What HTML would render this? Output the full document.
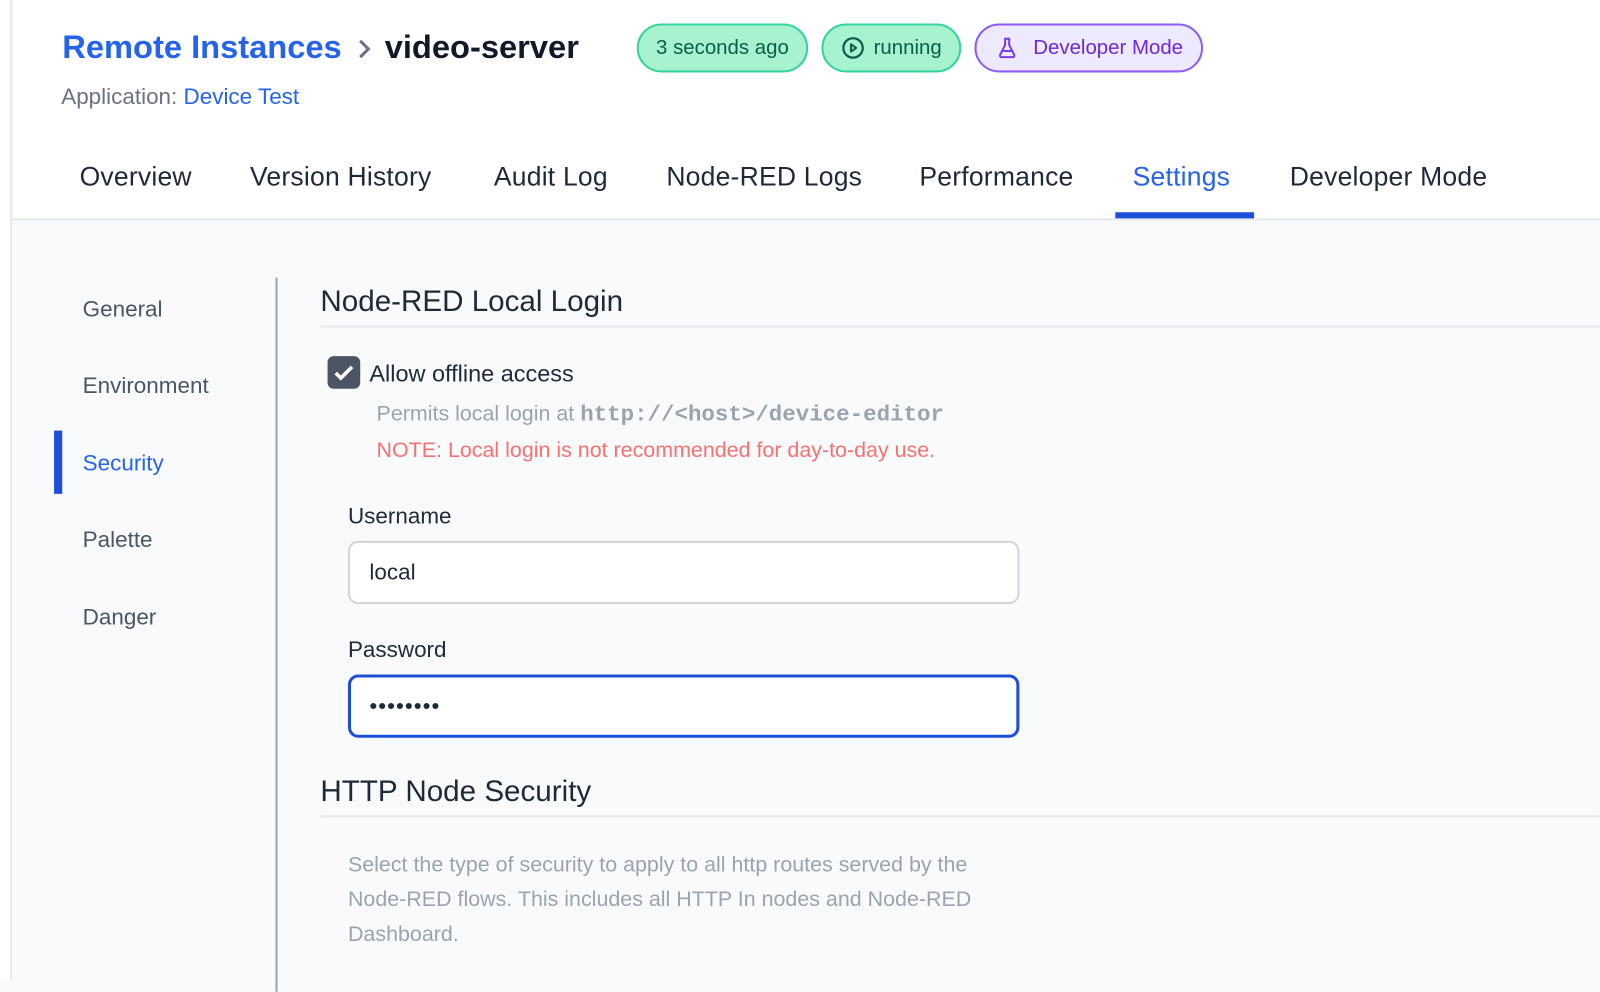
<!DOCTYPE html>
<html><head><meta charset="utf-8"><style>
*{box-sizing:border-box;margin:0;padding:0}
html,body{width:1600px;height:956px;overflow:hidden}
body{font-family:"Liberation Sans",sans-serif;background:#f9fafb;color:#1f2937}
#w{position:absolute;left:0;top:0;width:1568px;height:960px;transform:scale(1.0204);transform-origin:0 0;background:#fff}
.abs{position:absolute;white-space:nowrap}
.left{position:absolute;left:10px;top:0;width:2px;height:960px;background:#e5e7eb}
.main{position:absolute;left:12px;top:214px;right:0;bottom:0;background:#f9fafb;border-top:2px solid #e5e7eb}
.pill{position:absolute;top:23px;height:48px;border-radius:24px;font-size:20px;display:flex;align-items:center;justify-content:center;gap:8px}
.tab{position:absolute;top:158px;font-size:26px;color:#1f2937;letter-spacing:0.2px}
.side{position:absolute;left:81px;font-size:22px;color:#4b5563}
.h{position:absolute;left:314px;font-size:29px;color:#1f2937}
.rule{position:absolute;left:314px;right:0;height:2px;background:#e5e7eb}
.input{position:absolute;left:341px;width:658px;height:62px;border-radius:10px;background:#fff;font-size:22px;padding-left:19px;display:flex;align-items:center}
</style></head><body><div id="w">
<div class="left"></div>
<div class="abs" style="left:61px;top:28px;font-size:32px;font-weight:bold;color:#2563eb">Remote Instances</div>
<svg class="abs" style="left:348px;top:36px" width="18" height="24" viewBox="0 0 18 24"><path d="M5 4l8 8-8 8" stroke="#6b7280" stroke-width="3" fill="none"/></svg>
<div class="abs" style="left:377px;top:28px;font-size:32px;font-weight:bold;color:#111827">video-server</div>
<div class="abs" style="left:60px;top:82px;font-size:22px;color:#6b7280">Application: <span style="color:#2563eb">Device Test</span></div>
<div class="pill" style="left:624px;width:168px;background:#a7f3d0;border:2px solid #34d399;color:#065f46">3 seconds ago</div>
<div class="pill" style="left:805px;width:137px;background:#a7f3d0;border:2px solid #34d399;color:#065f46"><svg width="24" height="24" viewBox="0 0 24 24"><circle cx="12" cy="12" r="9.5" stroke="#065f46" stroke-width="2.2" fill="none"/><path d="M10 8.5v7l5-3.5z" stroke="#065f46" stroke-width="2" fill="none" stroke-linejoin="round"/></svg>running</div>
<div class="pill" style="left:955px;width:224px;background:#ede9fe;border:2px solid #8b5cf6;color:#6d28d9;gap:14px"><svg width="24" height="24" viewBox="0 0 24 24"><path d="M9 3h6M10 3v6l-5 10a1.5 1.5 0 0 0 1.3 2h11.4a1.5 1.5 0 0 0 1.3-2L14 9V3M7 15h10" stroke="#7c3aed" stroke-width="2" fill="none" stroke-linejoin="round"/></svg>Developer Mode</div>
<div class="tab" style="left:78px">Overview</div>
<div class="tab" style="left:245px">Version History</div>
<div class="tab" style="left:484px">Audit Log</div>
<div class="tab" style="left:653px">Node-RED Logs</div>
<div class="tab" style="left:901px">Performance</div>
<div class="tab" style="left:1110px;color:#2563eb">Settings</div>
<div class="tab" style="left:1264px">Developer Mode</div>
<div class="main"></div>
<div class="abs" style="left:1093px;top:208px;width:136px;height:6px;background:#1d4ed8"></div>
<div class="abs" style="left:270px;top:272px;width:2px;height:700px;background:#9ca3af"></div>
<div class="side" style="top:290px">General</div>
<div class="side" style="top:365px">Environment</div>
<div class="abs" style="left:53px;top:422px;width:8px;height:62px;background:#1d4ed8"></div>
<div class="side" style="top:441px;color:#2563eb">Security</div>
<div class="side" style="top:516px">Palette</div>
<div class="side" style="top:592px">Danger</div>
<div class="h" style="top:280px">Node-RED Local Login</div>
<div class="rule" style="top:319px"></div>
<div class="abs" style="left:321px;top:349px;width:32px;height:32px;border-radius:6px;background:#4b5563"><svg width="32" height="32" viewBox="0 0 32 32"><path d="M8 16.5l5 5 11-11" stroke="#fff" stroke-width="3.5" fill="none"/></svg></div>
<div class="abs" style="left:362px;top:353px;font-size:23px;color:#1f2937">Allow offline access</div>
<div class="abs" style="left:369px;top:394px;font-size:21px;color:#9ca3af">Permits local login at <b style="font-family:'Liberation Mono',monospace;font-size:22px">http://&lt;host&gt;/device-editor</b></div>
<div class="abs" style="left:369px;top:430px;font-size:21px;color:#f87171">NOTE: Local login is not recommended for day-to-day use.</div>
<div class="abs" style="left:341px;top:493px;font-size:22px;color:#1f2937">Username</div>
<div class="input" style="top:530px;border:2px solid #d1d5db">local</div>
<div class="abs" style="left:341px;top:624px;font-size:22px;color:#1f2937">Password</div>
<div class="input" style="top:661px;border:3px solid #1d4ed8;letter-spacing:1px;font-size:22px;padding-left:18px">••••••••</div>
<div class="h" style="top:760px">HTTP Node Security</div>
<div class="rule" style="top:799px"></div>
<div class="abs" style="left:341px;top:831px;font-size:21px;color:#9ca3af;white-space:normal;width:620px;line-height:34px">Select the type of security to apply to all http routes served by the Node-RED flows. This includes all HTTP In nodes and Node-RED Dashboard.</div>
</div></body></html>
